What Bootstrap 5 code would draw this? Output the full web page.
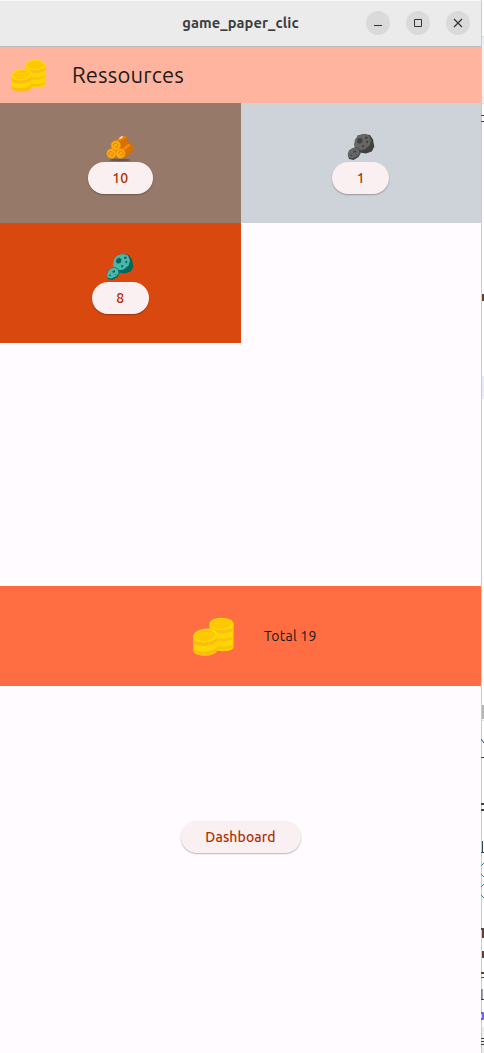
<!DOCTYPE html>
<html lang="en">
<head>
<meta charset="utf-8">
<meta name="viewport" content="width=device-width, initial-scale=1">
<title>game_paper_clic</title>
<link href="https://cdn.jsdelivr.net/npm/bootstrap@5.3.0/dist/css/bootstrap.min.css" rel="stylesheet">
<style>
  body { font-family: Ubuntu, "Noto Sans", "Open Sans", sans-serif; background: #fff; color: #211a18; height: 1053px; overflow: hidden; }
  .app-window { width: 481px; height: 1053px; background: #fffbff; flex: none; }
  .titlebar { height: 47px; background: #ebebeb; border-top: 1px solid #f9f9f9; border-bottom: 1px solid #b9b9b9; }
  .app-title { font-size: 14.667px; font-weight: 700; color: #3d3d3d; line-height: 20px; letter-spacing: .1px; padding-bottom: 1px; }
  .window-controls { right: 11px; top: 10px; gap: 16px; }
  .control { width: 24px; height: 24px; padding: 0; border: 0; border-radius: 50%; background: #dadada; }
  .control svg, .coin, .ore { display: block; }
  .appbar { height: 56px; background: #ffb4a0; padding-left: 11px; gap: 27px; }
  .appbar h1 { font-size: 22px; font-weight: 400; line-height: 28px; margin: 0; letter-spacing: .15px; }
  .stock { height: 483px; }
  .tile { height: 120px; padding-top: 29px; }
  .tile-wood { background: #967969; }
  .tile-iron { background: #ced3da; }
  .tile-copper { background: #d9480f; }
  .pill { width: 57px; height: 32px; border: 0; border-radius: 16px; padding: 0; background: #faf0f1; color: #b02f00; font-size: 14px; line-height: 32px; font-weight: 500; letter-spacing: .1px; box-shadow: 0 1px 1.500px rgba(0,0,0,.28); }
  .pill-wide { width: 65px; }
  .pill-dash { width: 120px; }
  .total { height: 100px; background: #ff6e42; font-size: 14px; letter-spacing: .25px; padding-left: 193px; gap: 30px; }
  .dash-row { padding-top: 135px; }
  .ore-iron { --base: #666; --dark: #414141; }
  .ore-copper { --base: #4db6ac; --dark: #00695c; }
</style>
</head>
<body>
<div class="d-flex">
  <main class="app-window d-flex flex-column">
    <header class="titlebar position-relative d-flex align-items-center justify-content-center flex-shrink-0">
      <span class="app-title">game_paper_clic</span>
      <div class="window-controls position-absolute d-flex">
        <button class="control" aria-label="Minimize"><svg width="24" height="24"><path d="M8 14.500h8" stroke="#333"/></svg></button>
        <button class="control" aria-label="Maximize"><svg width="24" height="24"><path d="M8.500 8.500h7v7h-7z" fill="none" stroke="#333"/></svg></button>
        <button class="control" aria-label="Close"><svg width="24" height="24"><path d="M8 8l8 8M16 8l-8 8" stroke="#333" stroke-width="1.200"/></svg></button>
      </div>
    </header>
    <svg width="0" height="0" class="position-absolute" aria-hidden="true">
      <symbol id="coins" viewBox="0 0 41 39">
        <path d="M16.500 6.500V30c2 5 24 6 24 0V6.500z" fill="#ffd600"/>
        <path d="M16.500 8c0 6 24 6 24 0v4c-1 6-23 6-24 0zM16.500 17c1 6 23 6 24 1v2c-1 6-23 6-24 0zM16.500 25c1 6 23 6 24 1v2c-1 6-23 6-24 0z" fill="#fdbf12"/>
        <ellipse cx="28.500" cy="7" rx="12" ry="6.200" fill="#ffda00"/>
        <ellipse cx="28.500" cy="7" rx="9.500" ry="4.300" fill="#ffc800" stroke="#ffbe05" stroke-width=".7"/>
        <path d="M.3 19v15c2 6.500 24 6 24-1.500V18z" fill="#ffd600"/>
        <path d="M.3 20c1 8 23 6 24-2v5c-1 7-23 8-24 2zM.3 31c2 5.500 23 4 24-2v3.500c0 7.500-22 8-24 1.500z" fill="#fdbc14"/>
        <ellipse cx="12.300" cy="18.500" rx="12.200" ry="6.800" transform="rotate(-7 12.300 18.500)" fill="#ffda00"/>
        <ellipse cx="12.300" cy="18.500" rx="9.600" ry="4.700" transform="rotate(-7 12.300 18.500)" fill="#ffc800" stroke="#ffbe05" stroke-width=".7"/>
      </symbol>
      <symbol id="ore" viewBox="0 0 28 28">
        <path d="M10.500 2L17 .5l6 1 3 4.500 1.300 7-2.500 5L19 20l-7-1-4-3z" fill="var(--dark)"/>
        <path d="M7 11l1-5 3-4 6-1.500 5 1.500 2 5-1.500 5-5 4-6 1L8 15z" fill="var(--base)"/>
        <path d="M11 5l3-.8 1.500 2-.7 3-3 1-2-2zM18 3.500l2-.5 1 1.500-1.500 1-1.500-.5zM20 7l1.500 1-1 2-1.500-1zM15.500 11.500l2 .5-1 2-1.500-.5z" fill="var(--dark)"/>
        <path d="M5 15l4-1.500 3.500 2L13.500 20l-2 3.500-5 3-4.500-1L.8 21 2 17z" fill="var(--dark)"/>
        <path d="M5 15l4-1 3 2 .6 4-2.600 3-5 2-3.500-1L1 21l1.200-3.500z" fill="var(--base)"/>
        <path d="M6.500 17.500l2-.7.7 1.500-1.200 1-1.500-.3zM3.500 21l1.500.3-.5 1.500-1.500-.5zM9 20.500l1 .5-1 1z" fill="var(--dark)"/>
      </symbol>
    </svg>
    <section class="appbar d-flex align-items-center flex-shrink-0">
      <svg class="coin" width="35" height="33"><use href="#coins"/></svg>
      <h1 style="margin-left:-1px">Ressources</h1>
    </section>
    <section class="stock flex-shrink-0">
      <div class="row g-0">
        <div class="col-6"><div class="tile tile-wood d-flex flex-column align-items-center">
          <svg class="ore" width="28" height="30" viewBox="0 0 28 30">
            <ellipse cx="14" cy="28" rx="10.500" ry="1.300" fill="#69574d"/>
            <path d="M5 11L17 4l5 2 1 4-10 10z" fill="#d76f00"/><path d="M10 8l8-4 3 1-9 5z" fill="#ef8800"/><path d="M13 6l3-2 1 1-3 2z" fill="#fff2d8"/>
            <path d="M14 18l8-7 5 2v6l-8 7z" fill="#d76f00"/><path d="M16 17l6-5 3 1-6 5z" fill="#f58b00"/>
            <g fill="#ffad12" stroke="#e88b00" stroke-width=".7"><circle cx="5.500" cy="21.500" r="4.800"/><circle cx="14.500" cy="21.500" r="4.800"/><circle cx="9.800" cy="13.500" r="4.800"/></g>
            <path d="M3 23c-2-5 6-4 4 0-1 2-3 0-2-1M13 22c-1-5 6-3 4 1-2 1-3 0-2-1M7.500 14c-1-5 6-3 4 1-2 1-3 0-2-1" fill="none" stroke="#d97a00" stroke-width=".9"/>
          </svg>
          <button class="pill pill-wide">10</button>
        </div></div>
        <div class="col-6"><div class="tile tile-iron d-flex flex-column align-items-center">
          <svg class="ore ore-iron" width="28" height="30" viewBox="0 -1.500 28 30"><use href="#ore" width="28" height="28"/></svg>
          <button class="pill">1</button>
        </div></div>
        <div class="col-6"><div class="tile tile-copper d-flex flex-column align-items-center">
          <svg class="ore ore-copper" width="28" height="30" viewBox="0 -1.500 28 30"><use href="#ore" width="28" height="28"/></svg>
          <button class="pill">8</button>
        </div></div>
      </div>
    </section>
    <section class="total d-flex align-items-center flex-shrink-0">
      <svg class="coin" width="41" height="39"><use href="#coins"/></svg>
      <span>Total 19</span>
    </section>
    <section class="dash-row d-flex justify-content-center">
      <button class="pill pill-dash">Dashboard</button>
    </section>
  </main>
  <!-- edge of the editor behind the window -->
  <svg width="3" height="1053" class="flex-shrink-0" aria-hidden="true">
    <path fill="#fff" d="M0 0h3v1053H0z"/>
    <path fill="#f0f2f5" d="M1 37h2v66H1z"/><path fill="#ddd" d="M1 36h2v1H1zM1 103h2v1H1zM1 720h2v1H1z"/>
    <path fill="#e7ecfa" d="M1 376h2v23H1z"/><path fill="#b6b6b6" d="M1 705h2v14H1z"/><path fill="#ededed" d="M1 1027h2v26H1z"/>
    <path fill="#ccc" d="M0 0h1v1053H0z"/>
    <path fill="#444" d="M0 115h3v1H0zM0 121h3v1H0zM0 757h3v1H0zM0 803h3v2H0zM0 809h3v2H0zM0 1038h3v1H0zM0 1041h3v1H0zM0 1044h3v1H0z"/>
    <path fill="#654331" d="M1 294h2v7H1zM0 928h3v2H0zM1 930h2v8H1zM1 951h2v7H1zM0 972h3v2H0zM0 977h3v1H0z"/>
    <path stroke="#244563" fill="none" d="M0 739l3 4M1.500 841v11M0 852.500h3M1 989v10M0 999.500h3"/>
    <path stroke="#248b97" fill="none" d="M3 863l-3 3M0 874l3 3M3 884l-3 3M0 895l3 3"/>
    <path stroke="#5137e4" fill="none" stroke-width="1.500" d="M0 1013h2v6H0"/>
  </svg>
</div>
</body>
</html>
